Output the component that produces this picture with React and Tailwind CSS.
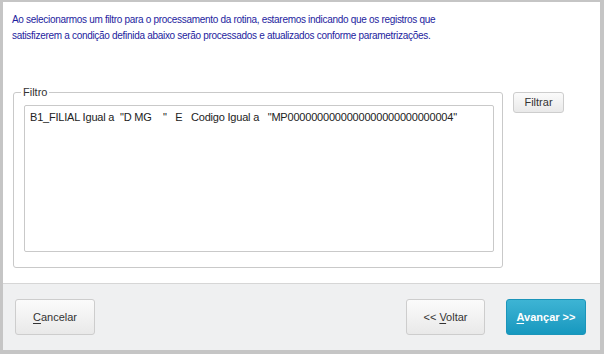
import React from 'react';

const font = { fontFamily: '"Liberation Sans", Arial, sans-serif' };

function Underlined({ first, rest }) {
  return (
    <span>
      <span className="underline underline-offset-2">{first}</span>
      {rest}
    </span>
  );
}

function GrayButton({ children, className = '' }) {
  return (
    <button
      type="button"
      className={`flex items-center justify-center rounded-[3px] border border-[#cdcdcd] bg-gradient-to-b from-[#fbfbfb] to-[#e9e9e9] text-[11px] text-[#333] ${className}`}
    >
      {children}
    </button>
  );
}

export default function App() {
  return (
    <div
      className="flex h-[354px] w-[604px] flex-col bg-[#c5c5c5] pb-[4px] pl-[3px] pr-[4px] pt-[2px]"
      style={font}
    >
      <div className="flex flex-1 flex-col bg-white">
        <div className="h-[282px] border-b border-[#d6d6d6] pl-[9px] pt-[10px]">
          <p className="text-[10px] leading-[16px] tracking-[-0.3px] text-[#1d1d9e]">
            Ao selecionarmos um filtro para o processamento da rotina, estaremos indicando que os registros que
            <br />
            satisfizerem a condição definida abaixo serão processados e atualizados conforme parametrizações.
          </p>

          <div className="mt-[48px] flex">
            <div className="relative ml-[1px] h-[176px] w-[490px] rounded-[3px] border border-[#c9c9c9] pl-[10px] pr-[8px] pt-[12px]">
              <span className="absolute -top-[7px] left-[7px] bg-white px-[2px] text-[11px] leading-[13px] text-[#333]">
                Filtro
              </span>
              <div className="h-[147px] rounded-[2px] border border-[#c9c9c9] pl-[5px] pt-[4px]">
                <p className="whitespace-pre text-[11px] leading-[14px] tracking-[-0.2px] text-[#222]">
                  {'B1_FILIAL Igual a  "D MG    "   E   Codigo Igual a   "MP0000000000000000000000000004"'}
                </p>
              </div>
            </div>
            <GrayButton className="ml-[10px] h-[21px] w-[51px]">Filtrar</GrayButton>
          </div>
        </div>

        <div className="flex flex-1 items-start bg-[#eff0f1] pl-[12px] pr-[14px] pt-[15px]">
          <GrayButton className="h-[36px] w-[80px]">
            <Underlined first="C" rest="ancelar" />
          </GrayButton>
          <div className="ml-auto flex gap-[21px]">
            <GrayButton className="h-[36px] w-[79px]">
              <span>
                {'<< '}
                <span className="underline underline-offset-2">V</span>
                oltar
              </span>
            </GrayButton>
            <button
              type="button"
              className="flex h-[36px] w-[80px] items-center justify-center rounded-[3px] border border-[#1b95ba] bg-gradient-to-b from-[#3db4d4] to-[#1598bf] text-[11px] font-bold text-white"
            >
              <Underlined first="A" rest="vançar >>" />
            </button>
          </div>
        </div>
      </div>
    </div>
  );
}
